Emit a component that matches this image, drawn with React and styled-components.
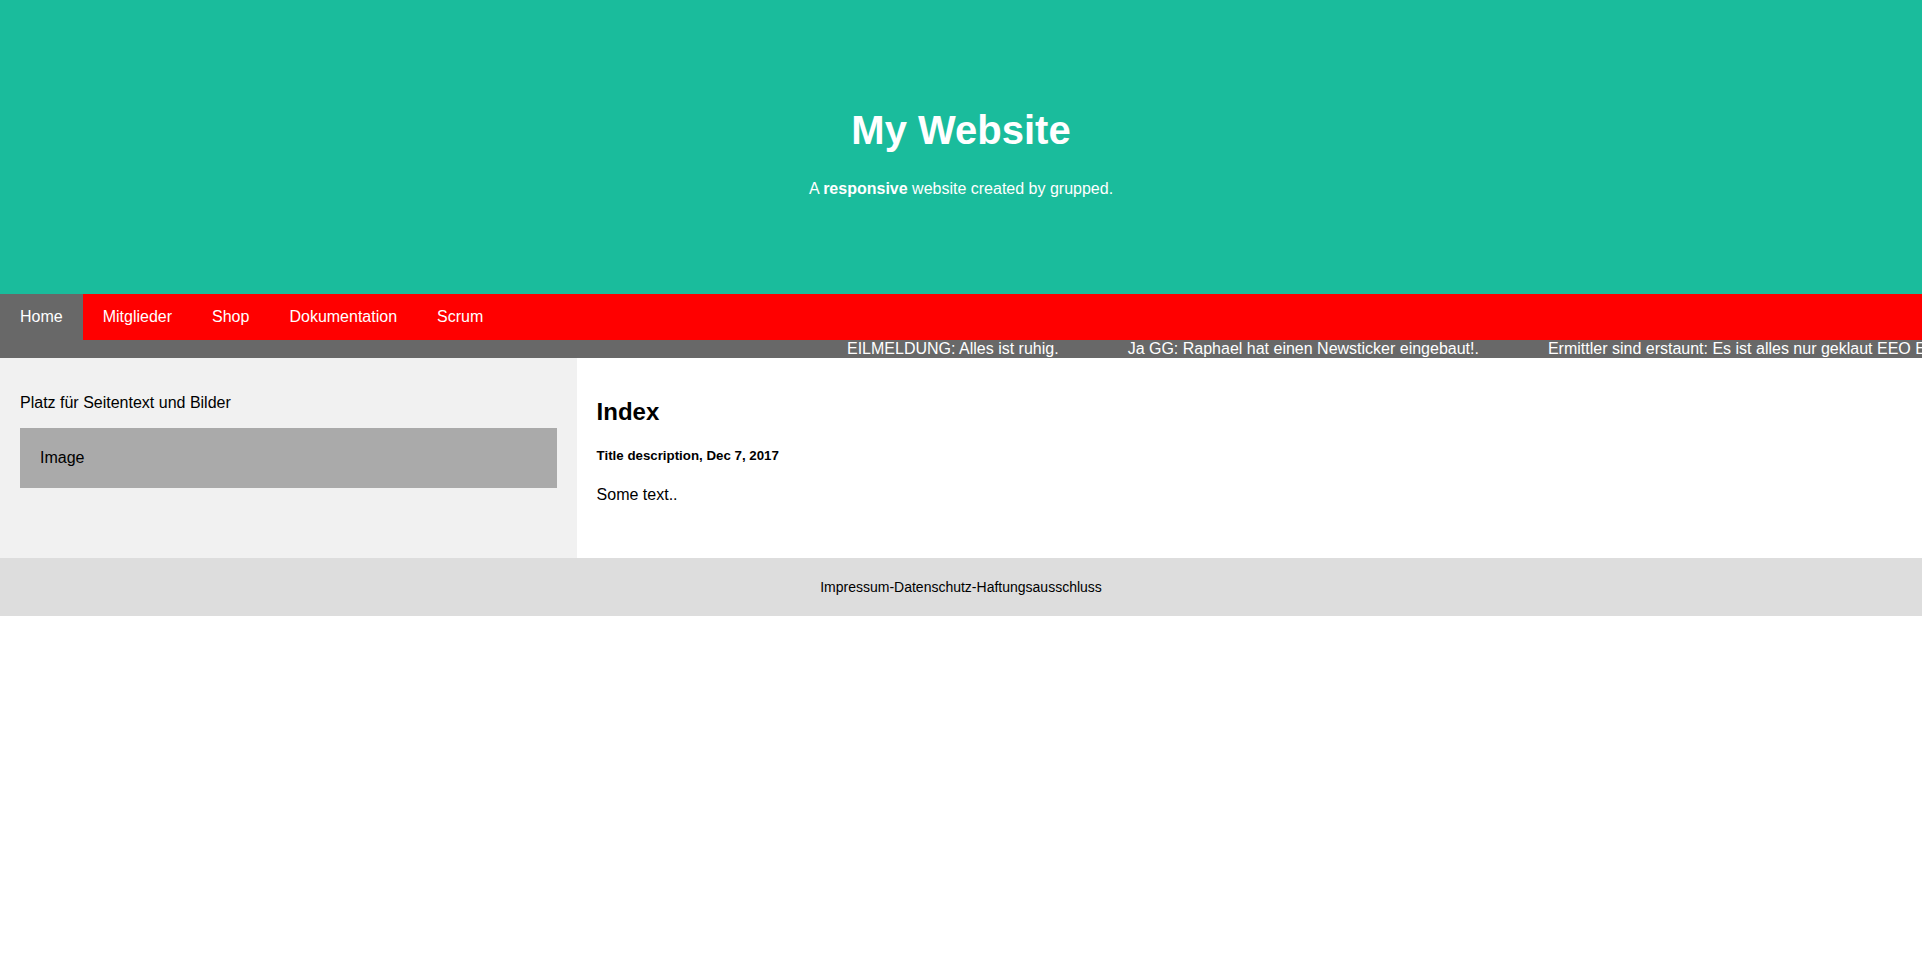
import React from 'react';
import styled, { createGlobalStyle } from 'styled-components';

const GlobalStyle = createGlobalStyle`
    * {
        box-sizing: border-box;
    }
    body {
        margin: 0;
        font-family: "Liberation Sans", Arial, sans-serif;
        font-size: 16px;
        background-color: #fff;
        color: #000;
    }
`;

const Header = styled.header`
    padding: 80px;
    text-align: center;
    background-color: #1abc9c;
    color: #fff;

    h1 {
        font-size: 40px;
        line-height: 46px;
        margin: 27px 0;
    }

    p {
        margin: 16px 0;
        line-height: 18px;
    }
`;

const TopNav = styled.nav`
    display: flex;
    background-color: #ff0000;
`;

const NavLink = styled.a`
    display: block;
    color: #fff;
    text-align: center;
    padding: 14px 20px;
    text-decoration: none;
    line-height: 18px;
    background-color: ${({active}) => active ? '#686868' : 'transparent'};
`;

const Ticker = styled.div`
    height: 18px;
    overflow: hidden;
    white-space: nowrap;
    background-color: #686868;
    color: #fff;
    line-height: 18px;
`;

const TickerTrack = styled.div`
    display: flex;
    transform: translateX(847px);
`;

const TickerItem = styled.span`
    padding-right: 69px;
`;

const Row = styled.div`
    display: flex;
    min-height: 200px;
`;

const Side = styled.aside`
    flex: 0 0 30%;
    background-color: #f1f1f1;
    padding: 20px;

    p {
        margin: 16px 0;
        line-height: 18px;
    }
`;

const FakeImg = styled.div`
    background-color: #aaa;
    width: 100%;
    padding: 21px 20px;
    line-height: 18px;
`;

const Main = styled.main`
    flex: 0 0 70%;
    background-color: #fff;
    padding: 20px;

    h2 {
        font-size: 24px;
        line-height: 28px;
        margin: 20px 0 22px;
    }

    h5 {
        font-size: 13.3px;
        line-height: 16px;
        margin: 22px 0;
    }

    p {
        margin: 16px 0;
        line-height: 18px;
    }
`;

const Footer = styled.footer`
    padding: 20px;
    text-align: center;
    background-color: #ddd;
    font-size: 14px;
    line-height: 18px;
`;

const navItems = ['Home', 'Mitglieder', 'Shop', 'Dokumentation', 'Scrum'];

const news = [
    'EILMELDUNG: Alles ist ruhig.',
    'Ja GG: Raphael hat einen Newsticker eingebaut!.',
    'Ermittler sind erstaunt: Es ist alles nur geklaut EEO EEO',
];

const App = () => {
    return (
        <>
            <GlobalStyle />
            <Header>
                <h1>My Website</h1>
                <p>A <b>responsive</b> website created by grupped.</p>
            </Header>
            <TopNav>
                {navItems.map((item, i) => (
                    <NavLink key={item} href="#" active={i === 0 ? 1 : 0}>{item}</NavLink>
                ))}
            </TopNav>
            <Ticker>
                <TickerTrack>
                    {news.map(n => <TickerItem key={n}>{n}</TickerItem>)}
                </TickerTrack>
            </Ticker>
            <Row>
                <Side>
                    <p>Platz für Seitentext und Bilder</p>
                    <FakeImg>Image</FakeImg>
                </Side>
                <Main>
                    <h2>Index</h2>
                    <h5>Title description, Dec 7, 2017</h5>
                    <p>Some text..</p>
                </Main>
            </Row>
            <Footer>Impressum-Datenschutz-Haftungsausschluss</Footer>
        </>
    )
};

export default App
